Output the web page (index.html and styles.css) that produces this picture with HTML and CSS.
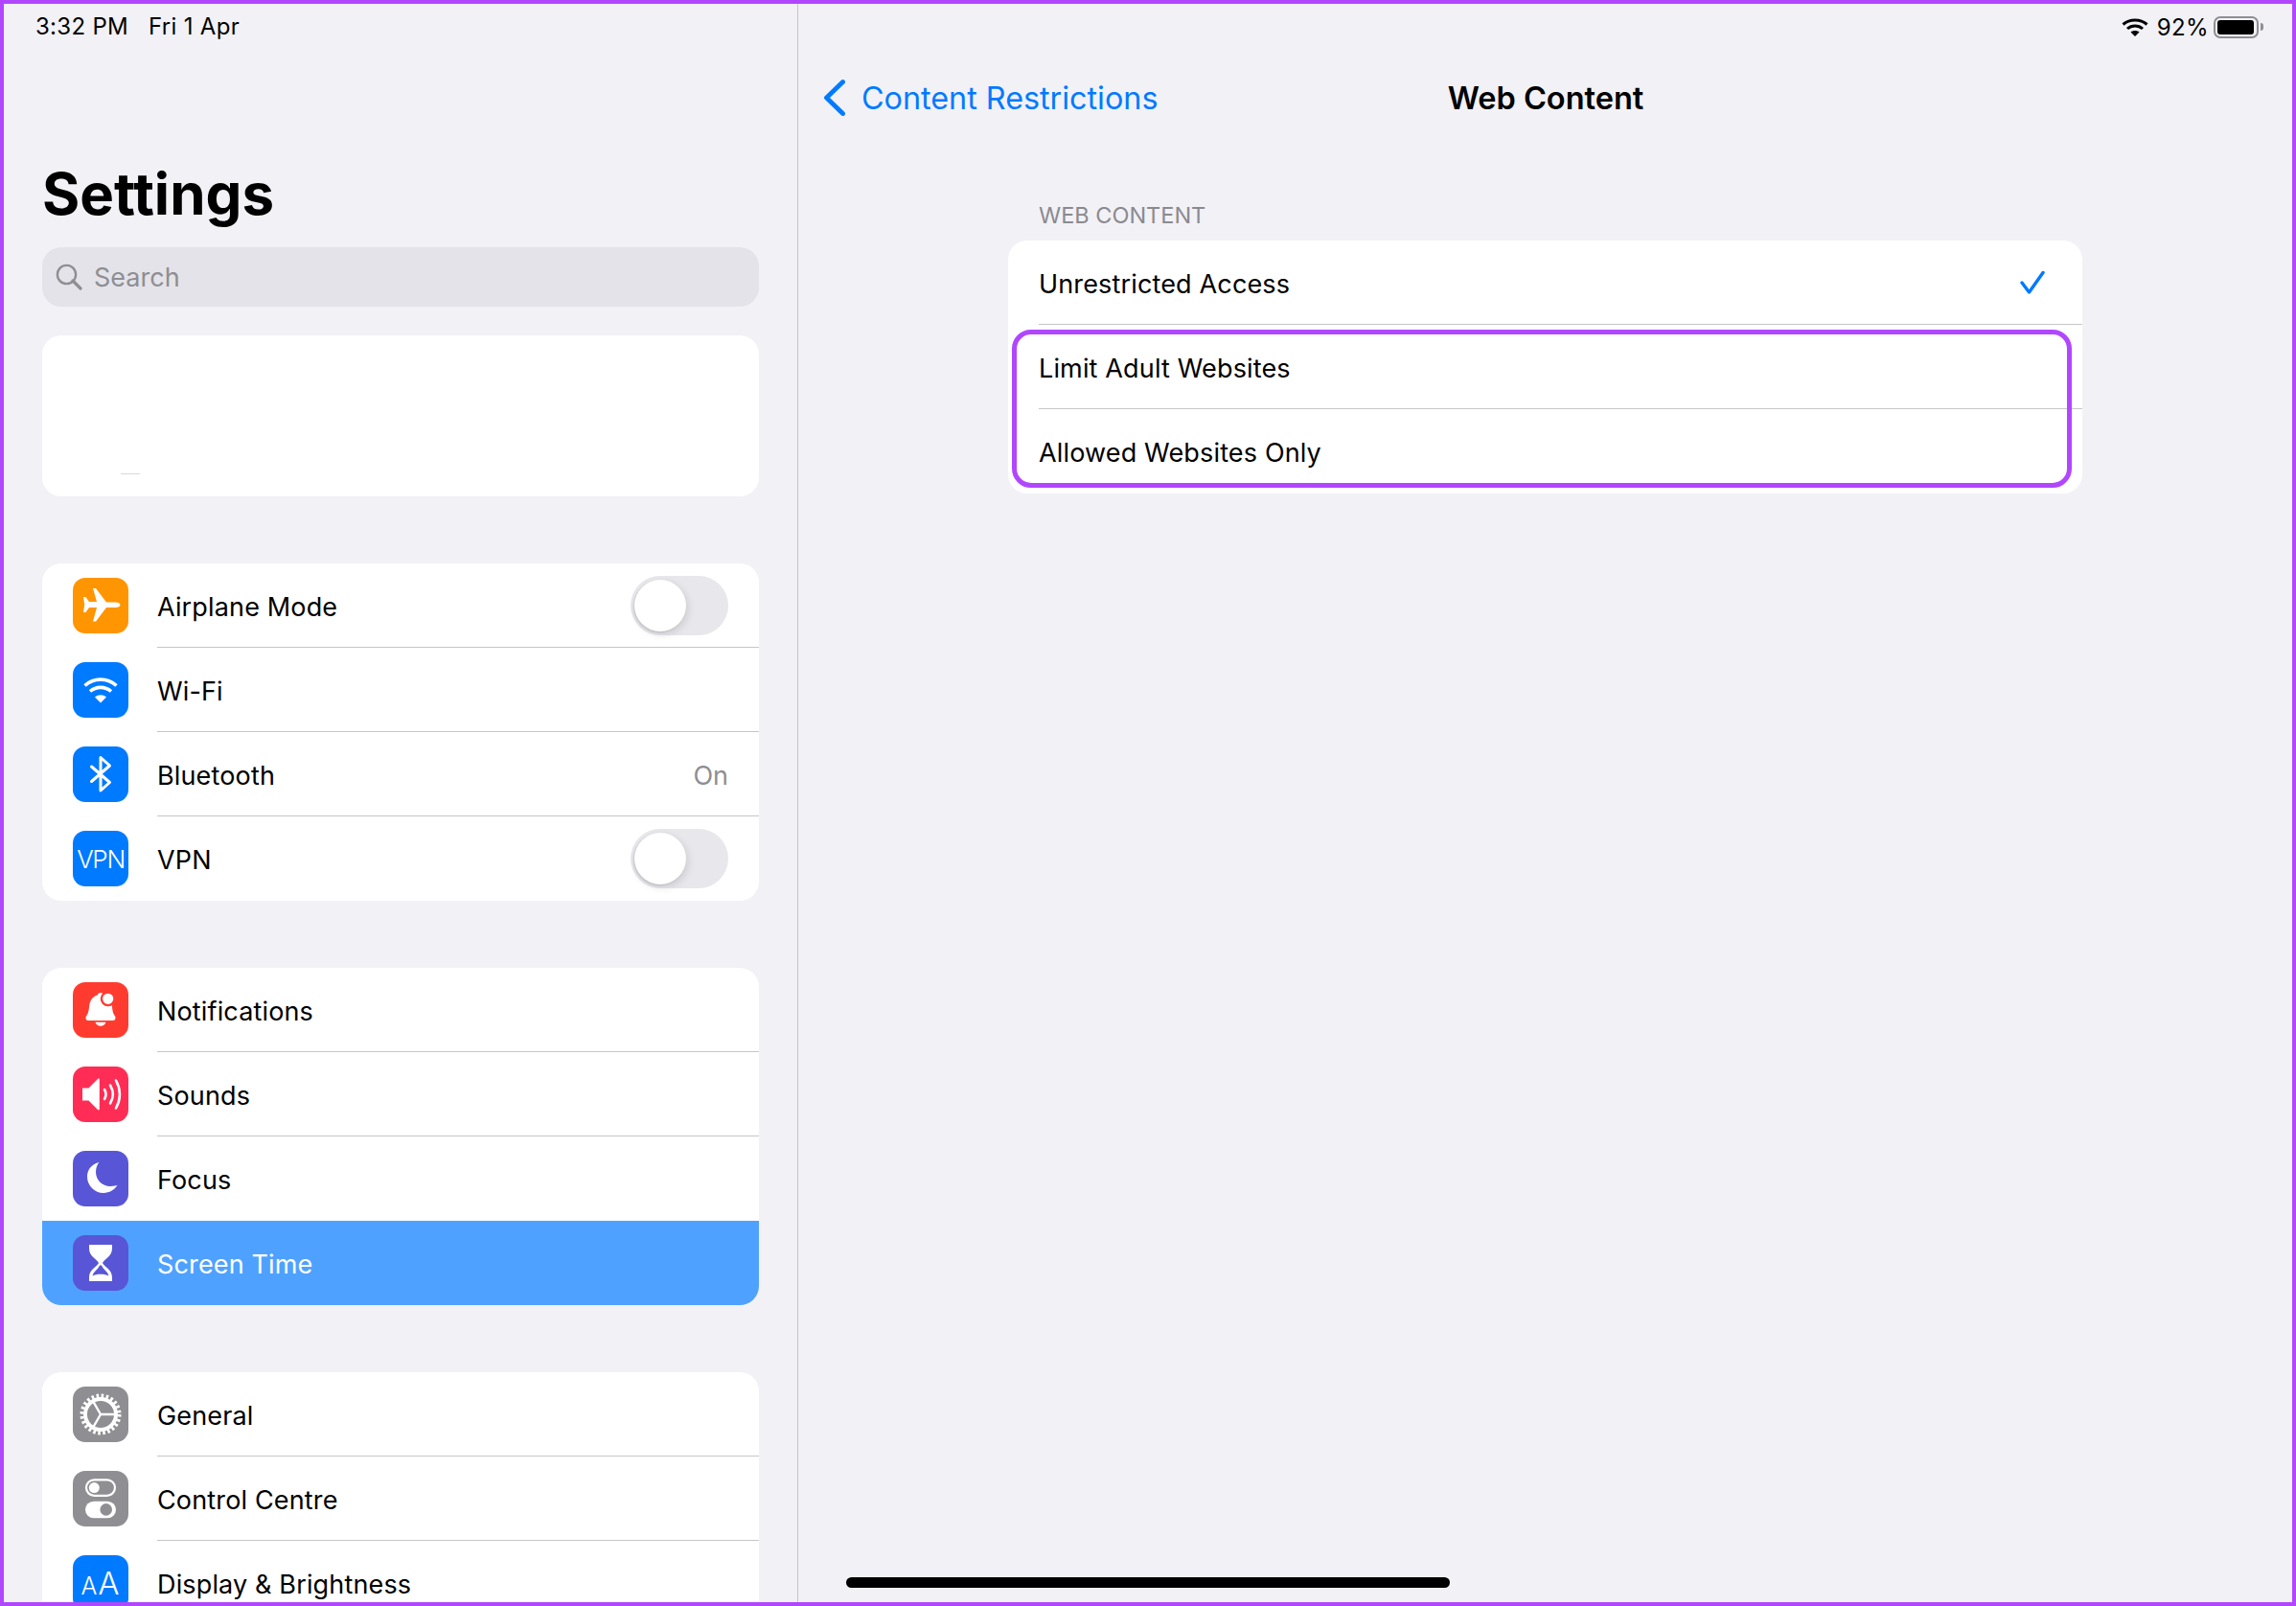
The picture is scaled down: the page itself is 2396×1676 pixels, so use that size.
FILE: index.html
```html
<!DOCTYPE html>
<html lang="en">
<head>
<meta charset="utf-8">
<title>Settings - Web Content</title>
<link rel="stylesheet" href="styles.css">
</head>
<body>
<div class="frame">
  <aside class="sidebar">
    <div class="status-left"><span>3:32 PM</span><span>Fri 1 Apr</span></div>
    <h1 class="title">Settings</h1>
    <div class="search">
      <svg class="search-icon" viewBox="0 0 28 28"><circle cx="11.5" cy="11.5" r="9.6" fill="none" stroke="#8e8e93" stroke-width="2.4"/><path d="M18 18l8 8" stroke="#8e8e93" stroke-width="3.2" stroke-linecap="round"/></svg>
      <span>Search</span>
    </div>
    <div class="profile"><span class="profile-mark"></span></div>

    <section class="group">
      <div class="row">
        <span class="icon orange"><svg viewBox="0 0 58 58"><path fill="#fff" d="M11 20h2.500l3.500 5h8L21 11h3l11 14.500h9.500c3 0 5 1.300 5 2.800s-2 2.800-5 2.800H35L24 45.500h-3l4-14.500h-8l-3.500 5H11l1.200-8z"/></svg></span>
        <span class="label">Airplane Mode</span>
        <span class="toggle"><span class="knob"></span></span>
      </div>
      <div class="row">
        <span class="icon blue"><svg viewBox="0 0 58 58"><path fill="none" stroke="#fff" stroke-width="3.6" d="M12.500 24.500c9.500-8.500 23.500-8.500 33 0M18 30.500c6.500-5.500 15.500-5.500 22 0"/><path fill="#fff" d="M29 42.500l-6-6c3.500-3 8.500-3 12 0z"/></svg></span>
        <span class="label">Wi-Fi</span>
      </div>
      <div class="row">
        <span class="icon blue"><svg viewBox="0 0 58 58"><path fill="none" stroke="#fff" stroke-width="3" stroke-linejoin="round" stroke-linecap="round" d="M19.500 21l19 16.500L29 46V11.500L38.500 20l-19 16.500"/></svg></span>
        <span class="label">Bluetooth</span>
        <span class="value">On</span>
      </div>
      <div class="row">
        <span class="icon blue"><span class="icon-text">VPN</span></span>
        <span class="label">VPN</span>
        <span class="toggle"><span class="knob"></span></span>
      </div>
    </section>

    <section class="group">
      <div class="row">
        <span class="icon red"><svg viewBox="0 0 58 58"><path fill="#fff" d="M29 11c1.600 0 2.800 1 3 2.200C38 15 40.500 20 41 26c.3 4.500 1.500 7.500 3 9.500 1 1.500.5 4.500-2 4.500H16c-2.500 0-3-3-2-4.500 1.500-2 2.700-5 3-9.500.5-6 3-11 9-12.800.2-1.200 1.400-2.200 3-2.200z"/><path fill="#fff" d="M23.500 41.700h11c-.8 2.600-3 4-5.500 4s-4.700-1.400-5.500-4z"/><circle cx="36.700" cy="17.300" r="6.800" fill="#fff" stroke="#ff3b30" stroke-width="2.400"/></svg></span>
        <span class="label">Notifications</span>
      </div>
      <div class="row">
        <span class="icon pink"><svg viewBox="0 0 58 58"><path fill="#fff" d="M10 22.500h6.500L26 13c.8-.8 1.800-.3 1.800.8v30.400c0 1.100-1 1.600-1.800.8l-9.500-9.500H10z"/><path fill="none" stroke="#fff" stroke-width="2.600" stroke-linecap="round" d="M33 24c2 3.300 2 6.700 0 10M39 19.500c3.600 6 3.600 13 0 19M45 14.500c5 9.200 5 19.800 0 29"/></svg></span>
        <span class="label">Sounds</span>
      </div>
      <div class="row">
        <span class="icon indigo"><svg viewBox="0 0 58 58"><path fill="#fff" d="M27.500 12c-2 2-3.500 6-3.500 10 0 8.500 6.800 15 15 15 4 0 7-1 7.500-1.200-3 5-8.500 8.200-14.500 8.200C22.800 44 15 36.300 15 27c0-7.500 5-13.500 12.500-15z"/></svg></span>
        <span class="label">Focus</span>
      </div>
      <div class="row selected">
        <span class="icon indigo"><svg viewBox="0 0 58 58"><path fill="#fff" fill-rule="evenodd" d="M17 10h24v4c0 8-8 11-10 15 2 4 10 7 10 15v4H17v-4c0-8 8-11 10-15-2-4-10-7-10-15zM28 31.500c-1.700 4.500-6.700 6.500-7.500 11 3.500-2.500 13.500-2.500 17 0-.8-4.500-5.800-6.500-7.500-11z"/></svg></span>
        <span class="label">Screen Time</span>
      </div>
    </section>

    <section class="group">
      <div class="row">
        <span class="icon gray"><svg viewBox="0 0 58 58"><circle cx="29" cy="29" r="16" fill="none" stroke="#fff" stroke-width="4"/><circle cx="29" cy="29" r="19.400" fill="none" stroke="#fff" stroke-width="4.200" stroke-dasharray="2.600 2.480"/><path fill="none" stroke="#fff" stroke-width="2.400" d="M29 29h16M29 29l-8-13.900M29 29l-8 13.900"/></svg></span>
        <span class="label">General</span>
      </div>
      <div class="row">
        <span class="icon gray"><svg viewBox="0 0 58 58"><rect x="14" y="9.400" width="30" height="16.400" rx="8.200" fill="none" stroke="#fff" stroke-width="2.200"/><circle cx="22.300" cy="17.600" r="5.500" fill="#fff"/><rect x="13" y="31.700" width="32" height="17.600" rx="8.800" fill="#fff"/><circle cx="34.700" cy="40.400" r="6.300" fill="#8e8e93"/></svg></span>
        <span class="label">Control Centre</span>
      </div>
      <div class="row">
        <span class="icon blue"><span class="icon-text aa"><small>A</small>A</span></span>
        <span class="label">Display &amp; Brightness</span>
      </div>
    </section>
  </aside>

  <main class="detail">
    <div class="status-right">
      <svg class="status-wifi" viewBox="0 0 28 20"><path fill="none" stroke="#000" stroke-width="3" d="M1.500 7.500c7-6 18-6 25 0M6 12c4.500-4 11.500-4 16 0"/><path d="M14 20l-4.500-4.500c2.500-2 6.500-2 9 0z"/></svg>
      <span class="battery-pct">92%</span>
      <span class="battery"><span class="battery-fill"></span></span>
      <span class="battery-cap"></span>
    </div>
    <nav class="navbar">
      <a class="back">
        <svg class="chevron" viewBox="0 0 24 40"><path d="M21.500 3.500L4.500 20l17 16.500" fill="none" stroke="#007aff" stroke-width="4.800" stroke-linecap="round" stroke-linejoin="round"/></svg>
        <span>Content Restrictions</span>
      </a>
      <div class="nav-title">Web Content</div>
    </nav>
    <div class="options">
      <div class="section-head">WEB CONTENT</div>
      <div class="card">
        <div class="option">
          <span class="label">Unrestricted Access</span>
          <svg class="check" viewBox="0 0 26 26"><path d="M2 13l7.500 10L24 2.500" fill="none" stroke="#007aff" stroke-width="3.400" stroke-linecap="round" stroke-linejoin="round"/></svg>
        </div>
        <div class="option"><span class="label">Limit Adult Websites</span></div>
        <div class="option"><span class="label">Allowed Websites Only</span></div>
        <div class="highlight"></div>
      </div>
    </div>
    <div class="home-bar"></div>
  </main>
</div>
</body>
</html>
```

FILE: styles.css
```css
* { box-sizing: border-box; }
html, body { margin: 0; height: 100%; overflow: hidden; }
body { font-family: Inter, "Noto Sans", sans-serif; color: #000; background: #f2f1f6; }

.frame {
  width: 2396px;
  height: 1676px;
  display: flex;
  border: 4px solid #b146ff;
  background: #f2f1f6;
  overflow: hidden;
}

.sidebar {
  width: 829px;
  flex: none;
  border-right: 1px solid #c6c6c8;
  padding: 0 40px;
  overflow: hidden;
}

.status-left {
  display: flex;
  gap: 21px;
  margin-left: -7px;
  height: 48px;
  align-items: center;
  font-size: 24px;
  letter-spacing: .3px;
  line-height: 1;
}

.title {
  margin: 115px 0 0;
  height: 91px;
  font-size: 60px;
  line-height: 70px;
  font-weight: 700;
}

.search {
  height: 62px;
  border-radius: 20px;
  background: #e4e3e9;
  display: flex;
  align-items: center;
  padding-left: 14px;
  gap: 12px;
  font-size: 27px;
  color: #8e8e93;
}
.search-icon { width: 28px; height: 28px; }

.profile {
  height: 168px;
  margin-top: 30px;
  margin-bottom: 70px;
  border-radius: 20px;
  background: #fff;
  position: relative;
}
.profile-mark {
  position: absolute;
  left: 82px;
  top: 144px;
  width: 20px;
  height: 1px;
  background: #d8d8da;
}

.group {
  background: #fff;
  border-radius: 20px;
  overflow: hidden;
  margin-bottom: 70px;
}

.row {
  height: 88px;
  display: flex;
  align-items: center;
  padding-left: 32px;
  position: relative;
  font-size: 27px;
}
.row + .row::before {
  content: "";
  position: absolute;
  left: 120px;
  right: 0;
  top: -1px;
  height: 1px;
  background: #c6c6c8;
}
.row.selected { background: #4fa1ff; color: #fff; }
.row.selected::before { display: none; }

.label { white-space: nowrap; letter-spacing: .15px; padding-top: 2px; }

.icon {
  width: 58px;
  height: 58px;
  flex: none;
  border-radius: 13px;
  margin-right: 30px;
  display: flex;
  align-items: center;
  justify-content: center;
}
.icon svg { width: 58px; height: 58px; display: block; }
.orange { background: #ff9500; }
.blue { background: #007aff; }
.red { background: #ff3b30; }
.pink { background: #ff2d55; }
.indigo { background: #5856d6; }
.gray { background: #8e8e93; }

.icon-text { color: #fff; font-size: 26px; font-weight: 350; letter-spacing: -1.3px; }
.icon-text.aa { font-size: 33px; letter-spacing: 1px; }
.icon-text.aa small { font-size: 25px; }

.value { margin-left: auto; margin-right: 32px; color: #8e8e93; padding-top: 2px; }

.toggle {
  margin-left: auto;
  margin-right: 32px;
  width: 102px;
  height: 62px;
  border-radius: 31px;
  background: #e7e7ec;
  padding: 4px;
}
.knob {
  display: block;
  width: 54px;
  height: 54px;
  border-radius: 50%;
  background: #fff;
  box-shadow: 2px 3px 8px rgba(0, 0, 0, .12), -1px 1px 2px rgba(0, 0, 0, .12);
}

.detail {
  flex: 1;
  position: relative;
  min-width: 0;
}

.status-right {
  height: 48px;
  display: flex;
  align-items: center;
  justify-content: flex-end;
  padding-right: 30px;
  font-size: 24px;
}
.status-wifi { width: 28px; height: 20px; margin-right: 9px; }
.battery-pct { margin-right: 5px; letter-spacing: .4px; }
.battery {
  width: 47px;
  height: 23px;
  border: 2px solid #8e8e93;
  border-radius: 7px;
  padding: 2px;
  display: block;
}
.battery-fill { display: block; width: 38px; height: 100%; background: #000; border-radius: 3px; }
.battery-cap { width: 3px; height: 8px; margin-left: 2px; background: #8e8e93; border-radius: 0 3px 3px 0; }

.navbar {
  height: 80px;
  margin-top: 10px;
  display: flex;
  align-items: center;
  justify-content: center;
  position: relative;
}
.back {
  position: absolute;
  left: 25px;
  top: 0;
  height: 80px;
  display: flex;
  align-items: center;
  gap: 17px;
  color: #007aff;
  font-size: 32.3px;
}
.chevron { width: 24px; height: 40px; }
.nav-title { font-size: 32.5px; font-weight: 600; margin-left: 1px; }

.options { width: 1121px; margin: 0 auto; padding-top: 69px; }

.section-head {
  padding-left: 32px;
  font-size: 23.5px;
  line-height: 28px;
  color: #8a8a8e;
  height: 40px;
}

.card {
  position: relative;
  background: #fff;
  border-radius: 20px;
  height: 264px;
}
.option {
  height: 88px;
  display: flex;
  align-items: center;
  justify-content: space-between;
  padding: 0 39px 0 32px;
  font-size: 27px;
  position: relative;
}
.option + .option::before {
  content: "";
  position: absolute;
  left: 32px;
  right: 0;
  top: -1px;
  height: 1px;
  background: #c6c6c8;
}
.check { width: 26px; height: 26px; }
.highlight {
  position: absolute;
  left: 4px;
  top: 93px;
  right: 11px;
  height: 165px;
  border: 5px solid #b146ff;
  border-radius: 20px;
}

.home-bar {
  position: absolute;
  left: 50px;
  bottom: 15px;
  width: 630px;
  height: 11px;
  border-radius: 6px;
  background: #000;
}
```
